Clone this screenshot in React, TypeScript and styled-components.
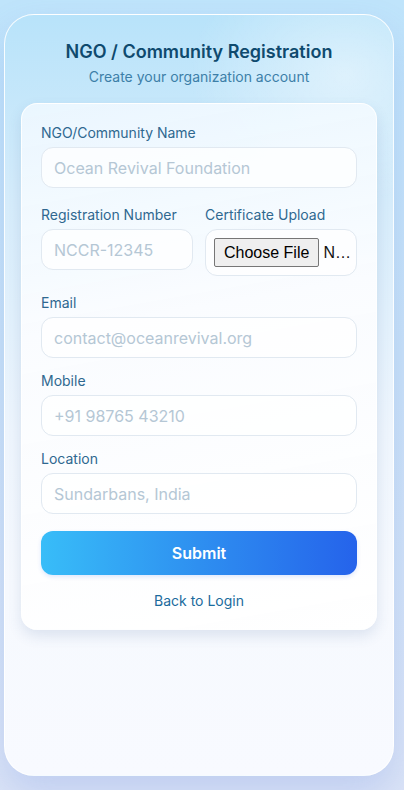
import React from "react";
import styled, { createGlobalStyle } from "styled-components";

const GlobalStyle = createGlobalStyle`
  html, body {
    margin: 0;
    padding: 0;
  }
  body {
    width: 404px;
    min-height: 790px;
    font-family: Inter, "Noto Sans", sans-serif;
    background: linear-gradient(180deg, #bfe4fb 0%, #c9e2f8 45%, #dbe4f7 100%);
    overflow: hidden;
  }
  * { box-sizing: border-box; }
`;

const Page = styled.div`
  display: flex;
  padding: 14px 10px 14px 4px;
`;

const Frame = styled.main`
  width: 390px;
  height: 762px;
  border-radius: 30px;
  border: 1px solid rgba(255, 255, 255, 0.85);
  background:
    radial-gradient(ellipse 220px 180px at 340px 60px, rgba(255, 255, 255, 0.45), rgba(255, 255, 255, 0) 70%),
    linear-gradient(180deg, #b8e3fa 0%, #d6ecfb 25%, #eef5fd 55%, #f6f9fe 75%, #f8faff 100%);
  box-shadow: 0 18px 36px rgba(99, 130, 220, 0.22);
  padding: 26px 16px 16px;
  display: flex;
  flex-direction: column;
`;

const Title = styled.h1`
  margin: 0;
  text-align: center;
  font-size: 18px;
  line-height: 22px;
  font-weight: 600;
  color: #0f4a6e;
`;

const Subtitle = styled.p`
  margin: 4px 0 16px;
  text-align: center;
  font-size: 14px;
  line-height: 20px;
  color: #3d7fa8;
`;

const Card = styled.form`
  border-radius: 16px;
  border: 1px solid rgba(255, 255, 255, 0.9);
  background: linear-gradient(170deg, rgba(236, 247, 255, 0.95) 0%, rgba(250, 252, 255, 0.98) 40%, #ffffff 100%);
  box-shadow: 0 6px 14px rgba(60, 90, 150, 0.14);
  padding: 20px 19px 20px;
  display: flex;
  flex-direction: column;
`;

const Field = styled.div`
  display: flex;
  flex-direction: column;
  margin-bottom: 14px;
  min-width: 0;
`;

const Row = styled.div`
  display: grid;
  grid-template-columns: 1fr 1fr;
  column-gap: 12px;
  margin: 4px 0;
  align-items: start;
`;

const Label = styled.label`
  font-size: 14px;
  line-height: 17px;
  color: #2f6890;
  margin-bottom: 6px;
`;

const TextInput = styled.input`
  width: 100%;
  height: 41px;
  padding: 10px 12px;
  border-radius: 12px;
  border: 1px solid #e1e9f1;
  background: rgba(255, 255, 255, 0.75);
  font-family: Inter, "Noto Sans", sans-serif;
  font-size: 16px;
  color: #1e3a52;
  outline: none;
  &::placeholder {
    color: #b5c7d5;
  }
`;

const FileInput = styled.input`
  width: 100%;
  padding: 8px;
  border-radius: 12px;
  border: 1px solid #e1e9f1;
  background: rgba(255, 255, 255, 0.75);
  font-family: "Liberation Sans", Arial, sans-serif;
  font-size: 16px;
  color: #111;
  &::file-selector-button {
    height: 29px;
    padding: 0 9px;
    margin-right: 4px;
    font-family: "Liberation Sans", Arial, sans-serif;
    font-size: 16px;
    color: #000;
    background: #efefef;
    border: 1px solid #767676;
    border-radius: 2px;
  }
`;

const SubmitButton = styled.button`
  margin-top: 3px;
  height: 44px;
  border: none;
  border-radius: 12px;
  background: linear-gradient(90deg, #38bdf8 0%, #2e8ff0 50%, #2563eb 100%);
  box-shadow: 0 2px 4px rgba(37, 99, 235, 0.15);
  color: #ffffff;
  font-family: Inter, "Noto Sans", sans-serif;
  font-size: 16px;
  font-weight: 600;
  cursor: pointer;
`;

const BackLink = styled.a`
  margin-top: 17px;
  text-align: center;
  font-size: 14px;
  line-height: 17px;
  color: #1b6b9d;
  text-decoration: none;
`;

export default function App() {
  return (
    <>
      <GlobalStyle />
      <Page>
        <Frame>
          <Title>NGO / Community Registration</Title>
          <Subtitle>Create your organization account</Subtitle>
          <Card onSubmit={(e) => e.preventDefault()}>
            <Field>
              <Label>NGO/Community Name</Label>
              <TextInput placeholder="Ocean Revival Foundation" />
            </Field>
            <Row>
              <Field>
                <Label>Registration Number</Label>
                <TextInput placeholder="NCCR-12345" />
              </Field>
              <Field>
                <Label>Certificate Upload</Label>
                <FileInput type="file" />
              </Field>
            </Row>
            <Field>
              <Label>Email</Label>
              <TextInput placeholder="contact@oceanrevival.org" />
            </Field>
            <Field>
              <Label>Mobile</Label>
              <TextInput placeholder="+91 98765 43210" />
            </Field>
            <Field>
              <Label>Location</Label>
              <TextInput placeholder="Sundarbans, India" />
            </Field>
            <SubmitButton type="submit">Submit</SubmitButton>
            <BackLink href="#">Back to Login</BackLink>
          </Card>
        </Frame>
      </Page>
    </>
  );
}
